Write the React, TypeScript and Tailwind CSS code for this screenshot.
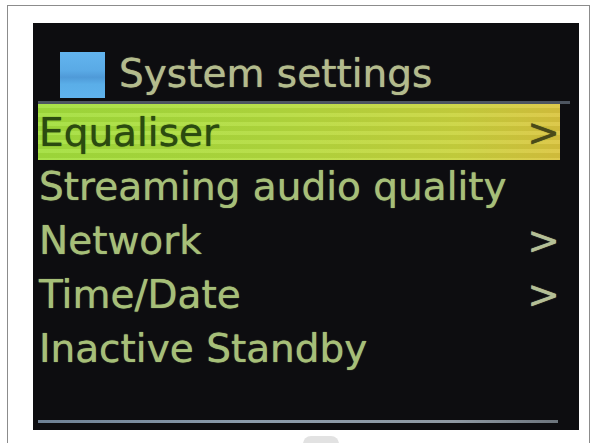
import React from 'react';

const rows = [
  { label: 'Streaming audio quality', more: false },
  { label: 'Network', more: true },
  { label: 'Time/Date', more: true },
  { label: 'Inactive Standby', more: false },
];

export default function App() {
  return (
    <div className="w-[593px] h-[443px] bg-white overflow-hidden font-['DejaVu_Sans',sans-serif]">
      <div className="ml-[7px] mt-[5px] w-[583px] h-[438px] border-l border-t border-r border-[#8c8c8c] pl-[25px] pt-[17px]">
        {/* screen */}
        <div className="w-[546px] h-[407px] bg-[#0d0d10] flex flex-col">
          <div className="h-[78px] flex items-start pt-[24px] pl-[27px]">
            <div className="mt-[5px] w-[45px] h-[46px] bg-[linear-gradient(180deg,#62b4ee_0%,#5aaae6_40%,#4f9ad8_55%,#5aaee8_70%,#60b2ec_100%)]" />
            <span className="ml-[14px] text-[39px] leading-[54px] text-[#b3bb8c] whitespace-nowrap [text-shadow:0_0_1px_#b3bb8c]">System settings</span>
          </div>
          <div className="ml-[5px] w-[532px] h-[3px] bg-[#4d5560]" />
          <div className="px-[5px] flex flex-col">
            <div className="w-[522px] h-[56px] flex justify-between items-start bg-[image:repeating-linear-gradient(180deg,rgba(255,255,255,0.07)_0px,rgba(255,255,255,0.07)_4px,rgba(0,0,0,0.05)_4px,rgba(0,0,0,0.05)_9px),linear-gradient(90deg,#a2df3c_0%,#b4dc3e_45%,#cad43e_80%,#dac43e_100%)]">
              <span className="pl-[1px] text-[39px] leading-[58px] text-[#2b4a10] whitespace-nowrap [text-shadow:0_0_1px_#2b4a10]">Equaliser</span>
              <span className="text-[39px] leading-[58px] text-[#4a4a18] [text-shadow:0_0_1px_#4a4a18]">&gt;</span>
            </div>
            {rows.map((r) => (
              <div key={r.label} className="w-[522px] h-[54px] flex justify-between items-start">
                <span className="pl-[1px] text-[39px] leading-[54px] text-[#a6bf78] whitespace-nowrap [text-shadow:0_0_1px_#a6bf78]">{r.label}</span>
                {r.more && <span className="text-[39px] leading-[54px] text-[#b4bf96] [text-shadow:0_0_1px_#b4bf96]">&gt;</span>}
              </div>
            ))}
          </div>
          <div className="mt-auto mb-[7px] ml-[5px] w-[520px] h-[3px] bg-[linear-gradient(90deg,#6d8094_0%,#8a9aaa_40%,#8e98a2_80%,#6c747c_100%)]" />
        </div>
        <div className="mt-[6px] ml-[270px] w-[36px] h-[8px] rounded-t-full bg-[#e2e2e2]" />
      </div>
    </div>
  );
}
